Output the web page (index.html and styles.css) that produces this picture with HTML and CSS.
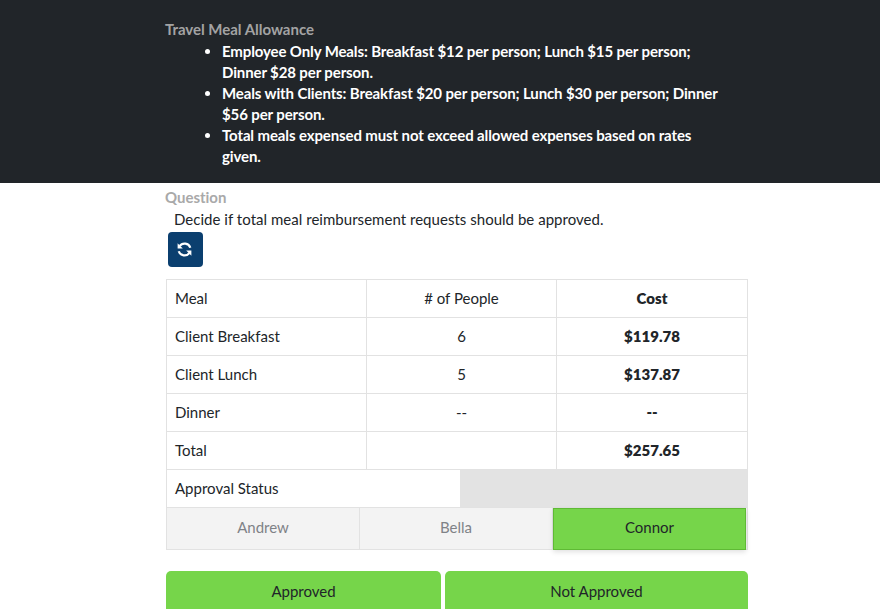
FILE: index.html
```html
<!DOCTYPE html>
<html lang="en">
<head>
    <meta charset="UTF-8">
    <title>Travel Meal Allowance</title>
    <meta name="viewport" content="width=device-width">
    <link rel="stylesheet" href="styles.css">
</head>
<body>
    <section class="intro">
        <div class="wrap">
            <h2 class="label label-dark">Travel Meal Allowance</h2>
            <ul class="rules">
                <li>Employee Only Meals: Breakfast $12 per person; Lunch $15 per person; Dinner $28 per person.</li>
                <li>Meals with Clients: Breakfast $20 per person; Lunch $30 per person; Dinner $56 per person.</li>
                <li>Total meals expensed must not exceed allowed expenses based on rates given.</li>
            </ul>
        </div>
    </section>

    <main class="wrap">
        <h2 class="label">Question</h2>
        <p class="question">Decide if total meal reimbursement requests should be approved.</p>
        <button class="btn-reset" aria-label="Reset">
            <svg viewBox="0 0 15 15" width="15" height="15" fill="none" stroke="#fff" stroke-width="2.2">
                <path d="M2.6 4.2A6 6 0 0 1 13.3 5.8"/>
                <path d="M12.4 10.8A6 6 0 0 1 1.7 9.2"/>
                <path d="M0.6 1.2V6.4H5.8z" fill="#fff" stroke="none"/>
                <path d="M14.4 13.8V8.6H9.2z" fill="#fff" stroke="none"/>
            </svg>
        </button>

        <div class="sheet">
            <div class="row">
                <div class="cell">Meal</div>
                <div class="cell center">
                    # of People
                </div>
                <div class="cell center bold">Cost</div>
            </div>
            <div class="row">
                <div class="cell">Client Breakfast</div>
                <div class="cell center">6</div>
                <div class="cell center bold">$119.78</div>
            </div>
            <div class="row">
                <div class="cell">Client Lunch</div>
                <div class="cell center">5</div>
                <div class="cell center bold">$137.87</div>
            </div>
            <div class="row">
                <div class="cell">Dinner</div>
                <div class="cell center">--</div>
                <div class="cell center bold">--</div>
            </div>
            <div class="row">
                <div class="cell">Total</div>
                <div class="cell center"></div>
                <div class="cell center bold">$257.65</div>
            </div>
            <div class="row row-status">
                <div class="cell">Approval Status</div>
                <div class="cell cell-empty"></div>
            </div>
            <div class="tabs">
                <button class="tab">Andrew</button>
                <button class="tab">Bella</button>
                <button class="tab tab-active">Connor</button>
            </div>
        </div>

        <div class="answers">
            <button class="answer answer-yes">Approved</button>
            <button class="answer answer-no">Not Approved</button>
        </div>
    </main>
</body>
</html>
```

FILE: styles.css
```css
*,
*::after,
*::before{
    padding: 0;
    margin: 0;
    box-sizing: border-box;
}
html{
    font: normal 15px/21px "Lato", "Open Sans", sans-serif;
    color: #212529;
}
body{
    height: 609px;
    overflow: hidden;
    background: #fff;
}
.wrap{
    width: 582px;
    margin-left: 166px;
}
.intro{
    background: #212529;
    height: 183px;
    padding-top: 19px;
}
.label{
    font-size: 15px;
    line-height: 21px;
    font-weight: 700;
    color: #9a9a9a;
    letter-spacing: -0.02px;
    margin-left: -1px;
    margin-bottom: 1px;
}
.label-dark{
    color: #a3a3a3;
}
.rules{
    list-style: disc;
    padding-left: 56px;
    padding-right: 24px;
    color: #fff;
    font-weight: 700;
    letter-spacing: -0.12px;
}
main .label{
    margin-top: 4px;
    color: #a9a9a9;
}
.question{
    padding-left: 8px;
    letter-spacing: 0.03px;
}
.btn-reset{
    display: flex;
    align-items: center;
    justify-content: center;
    width: 35px;
    height: 35px;
    margin: 2px 0 12px 2px;
    padding-right: 2px;
    border: none;
    border-radius: 4px;
    background: #0b3f6f;
}
.sheet{
    border: 1px solid #e2e2e2;
    border-bottom-width: 1px;
}
.row{
    display: grid;
    grid-template-columns: 199px 190px 1fr;
    height: 38px;
    border-bottom: 1px solid #e2e2e2;
}
.cell{
    display: flex;
    align-items: center;
    padding: 0 0 1px 8px;
    border-left: 1px solid #e2e2e2;
}
.cell:first-child{
    border-left: none;
}
.center{
    justify-content: center;
    padding-left: 0;
}
.bold{
    font-weight: 800;
}
.row-status{
    grid-template-columns: 293px 1fr;
}
.row-status .cell-empty{
    background: #e3e3e3;
    border-left: none;
}
.tabs{
    display: grid;
    grid-template-columns: 193px 193px 193px;
    height: 41px;
    background: #f3f3f3;
}
.tab{
    font: inherit;
    padding-bottom: 3px;
    color: #7f8287;
    background: #f3f3f3;
    border: none;
    border-right: 1px solid #e2e2e2;
}
.tab-active{
    color: #212529;
    background: #76d54a;
    border: 1px solid #5fba35;
    margin-bottom: -1px;
    box-shadow: 0 2px 5px rgba(0, 0, 0, 0.12);
}
.answers{
    display: flex;
    gap: 4px;
    margin-top: 21px;
}
.answer{
    font: inherit;
    height: 48px;
    padding-bottom: 8px;
    color: #212529;
    background: #76d54a;
    border: none;
    border-radius: 5px;
}
.answer-yes{
    width: 275px;
}
.answer-no{
    flex: 1;
}
```
